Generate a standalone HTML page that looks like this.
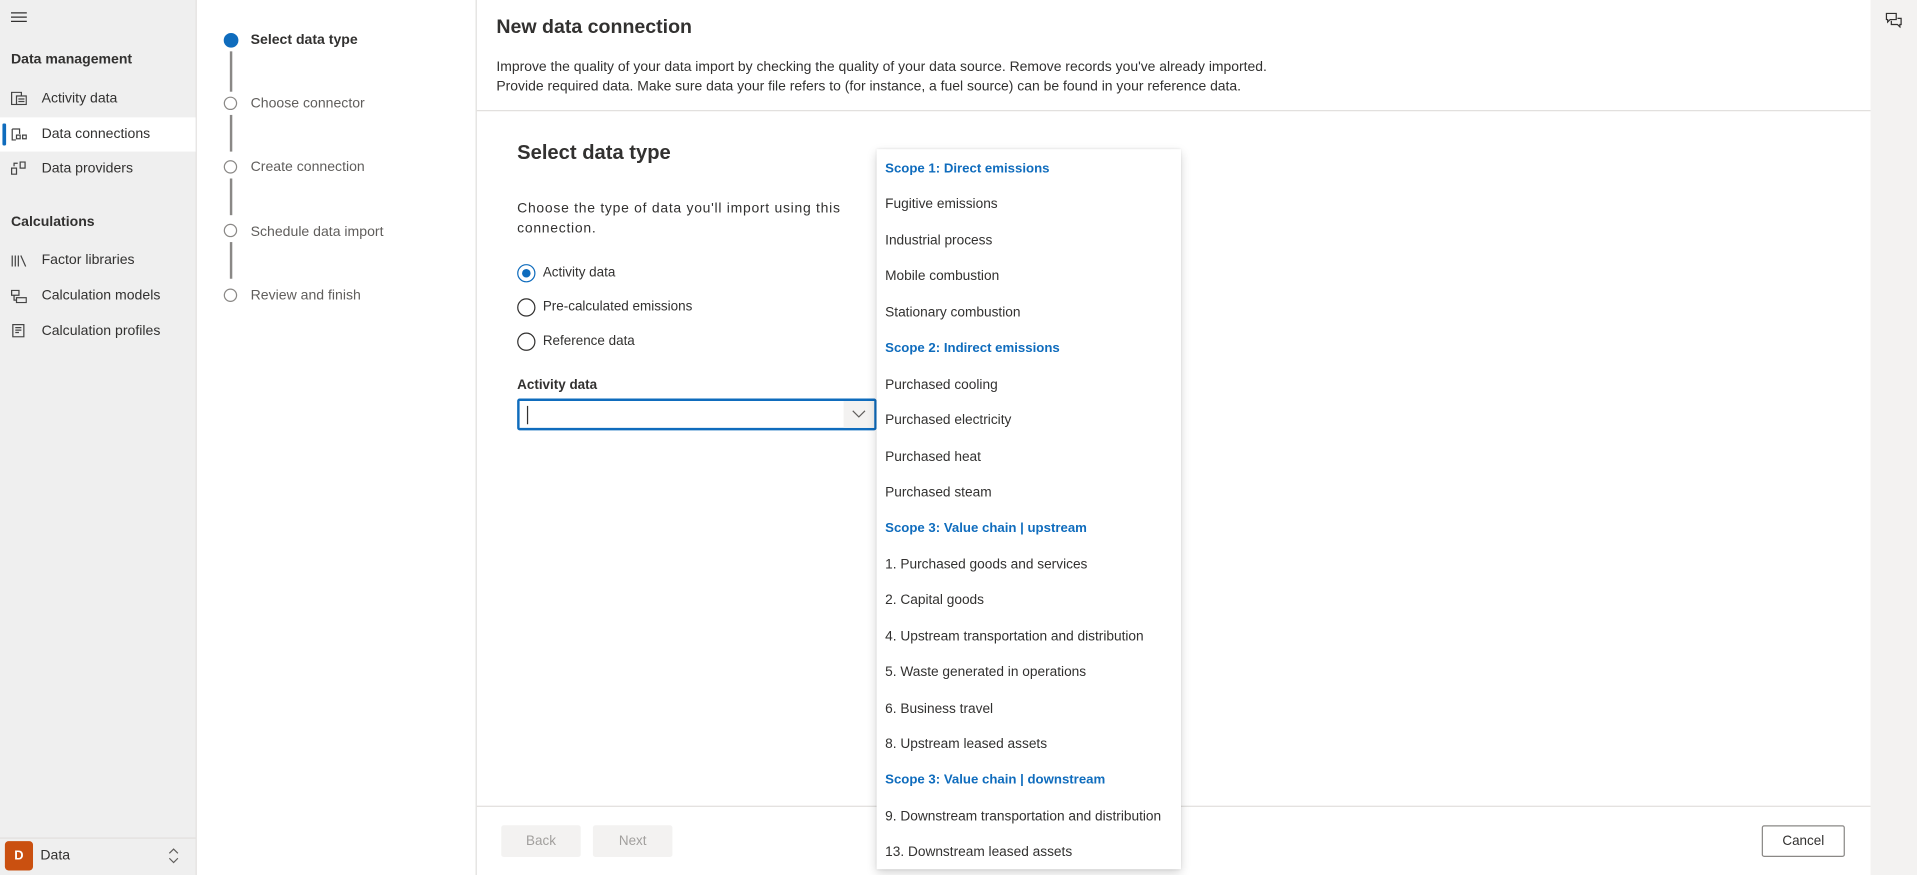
<!DOCTYPE html>
<html><head><meta charset="utf-8"><style>
html,body{margin:0;padding:0;width:1917px;height:875px;overflow:hidden;background:#fff}
#w{position:absolute;left:0;top:0;width:1568px;height:716px;transform:scale(1.22258);transform-origin:0 0;font-family:"Liberation Sans",sans-serif;color:#323130;font-size:11.5px}
.a{position:absolute;white-space:nowrap}
.nav{position:absolute;left:0;top:0;width:160px;height:716px;background:#efefef;border-right:1px solid #e1dfdd}
.steps{position:absolute;left:161px;top:0;width:228px;height:716px;background:#fff;border-right:1px solid #e1dfdd}
.circ{position:absolute;width:9px;height:9px;border:1.5px solid #8a8886;border-radius:50%;background:#fff}
.vl{position:absolute;left:188px;width:1.5px;background:#8a8886}
.st{position:absolute;left:205px;color:#605e5c;font-size:11.5px}
.item{position:absolute;left:34px;font-size:11.5px}
.ic{position:absolute;left:9px;width:13px;height:11px}
.radio{position:absolute;left:423px;width:13px;height:13px;border:1px solid #323130;border-radius:50%}
.dd{position:absolute;left:717px;top:122px;width:249px;height:589px;background:#fff;box-shadow:0 3px 8px rgba(0,0,0,.18),0 0 2px rgba(0,0,0,.12)}
.dd div{position:absolute;left:7px;font-size:11.2px;color:#323130;white-space:nowrap;margin-top:2px}
.dd .h{color:#0f6cbd;font-weight:bold;font-size:10.8px}
</style></head><body><div id="w">
<div class="nav">
 <svg class="a" style="left:9px;top:9px" width="13" height="10"><path d="M0 1.5H13M0 5H13M0 8.5H13" stroke="#323130" stroke-width="1"/></svg>
 <div class="a" style="left:9px;top:43px;font-weight:bold;font-size:11.5px">Data management</div>
 <svg class="ic" style="top:75px" viewBox="0 0 13 11"><rect x=".5" y=".5" width="8" height="10" fill="none" stroke="#444"/><rect x="4.5" y="3.5" width="8" height="7" fill="#efefef" stroke="#444"/><path d="M6 6h5M6 8h5" stroke="#444"/></svg>
 <div class="item" style="top:75px">Activity data</div>
 <div class="a" style="left:0;top:96px;width:160px;height:28px;background:#fff"></div>
 <div class="a" style="left:2px;top:101px;width:3px;height:18px;background:#0f6cbd;border-radius:1px"></div>
 <svg class="ic" style="top:104px" viewBox="0 0 13 11"><path d="M1 1.5h6v4M1 1.5v9h3" fill="none" stroke="#444"/><rect x="4.5" y="6.5" width="3" height="3" fill="none" stroke="#444"/><rect x="9.5" y="6.5" width="3" height="3" fill="none" stroke="#444"/></svg>
 <div class="item" style="top:104px">Data connections</div>
 <svg class="ic" style="top:132px" viewBox="0 0 13 11"><rect x=".5" y="5.5" width="4" height="5" fill="none" stroke="#444"/><rect x="7.5" y=".5" width="4" height="5" fill="none" stroke="#444"/><path d="M2.5 4V1.5h3" fill="none" stroke="#444"/></svg>
 <div class="item" style="top:132px">Data providers</div>
 <div class="a" style="left:9px;top:176px;font-weight:bold;font-size:11.5px">Calculations</div>
 <svg class="ic" style="top:208px" viewBox="0 0 13 11"><path d="M1 1v9M3.5 1v9M6 1v9M8 1l4 9" stroke="#444" fill="none"/></svg>
 <div class="item" style="top:207px">Factor libraries</div>
 <svg class="ic" style="top:237px" viewBox="0 0 13 11"><rect x=".5" y=".5" width="6" height="4" fill="none" stroke="#444"/><rect x="4.5" y="6.5" width="8" height="4" fill="none" stroke="#444"/><path d="M2.5 4.5v4h2" fill="none" stroke="#444"/></svg>
 <div class="item" style="top:236px">Calculation models</div>
 <svg class="ic" style="top:265px" viewBox="0 0 13 11"><rect x="1.5" y=".5" width="9" height="10" fill="none" stroke="#444"/><path d="M3.5 3h5M3.5 5h5M3.5 7h3" stroke="#444"/></svg>
 <div class="item" style="top:265px">Calculation profiles</div>
 <div class="a" style="left:0;top:685px;width:160px;height:1px;background:#e1dfdd"></div>
 <div class="a" style="left:4px;top:688px;width:23px;height:24px;background:#ca5010;border-radius:3px;color:#fff;font-size:10.5px;font-weight:bold;text-align:center;line-height:24px">D</div>
 <div class="a" style="left:33px;top:694px;font-size:11.5px">Data</div>
 <svg class="a" style="left:137px;top:693px" width="10" height="14"><path d="M1.5 5l3.5-3.5 3.5 3.5M1.5 9l3.5 3.5 3.5-3.5" fill="none" stroke="#605e5c"/></svg>
</div>
<div class="steps"></div>
<div class="circ" style="left:183px;top:27px;border:none;width:12px;height:12px;background:#0f6cbd"></div>
<div class="st" style="top:27px;color:#323130;font-weight:bold">Select data type</div>
<div class="vl" style="height:33px;top:42px"></div>
<div class="circ" style="left:183px;top:79px"></div><div class="st" style="top:79px">Choose connector</div>
<div class="vl" style="top:94px;height:30px"></div>
<div class="circ" style="left:183px;top:131px"></div><div class="st" style="top:131px">Create connection</div>
<div class="vl" style="top:146px;height:30px"></div>
<div class="circ" style="left:183px;top:183px"></div><div class="st" style="top:184px">Schedule data import</div>
<div class="vl" style="top:198px;height:30px"></div>
<div class="circ" style="left:183px;top:236px"></div><div class="st" style="top:236px">Review and finish</div>

<div class="a" style="left:406px;top:14px;font-size:16px;font-weight:bold;color:#323130">New data connection</div>
<div class="a" style="left:406px;top:47px;font-size:11.4px;line-height:16px">Improve the quality of your data import by checking the quality of your data source. Remove records you've already imported.<br>Provide required data. Make sure data your file refers to (for instance, a fuel source) can be found in your reference data.</div>
<div class="a" style="left:390px;top:90px;width:1140px;height:1px;background:#e1dfdd"></div>
<div class="a" style="left:1530px;top:0;width:38px;height:716px;background:#f3f2f1"></div>
<svg class="a" style="left:1542px;top:10px" width="15" height="13" viewBox="0 0 15 13"><path d="M1 1h8v5H4l-2 2V6H1z M5 7v3h5l2 2v-2h1V5h-3" fill="none" stroke="#323130" stroke-width="1"/></svg>

<div class="a" style="left:423px;top:116px;font-size:16.5px;font-weight:bold;color:#323130">Select data type</div>
<div class="a" style="left:423px;top:163px;font-size:11.4px;line-height:16px;letter-spacing:0.6px">Choose the type of data you'll import using this<br>connection.</div>
<div class="radio" style="top:216px;border-color:#0f6cbd"><div style="position:absolute;left:3px;top:3px;width:7px;height:7px;border-radius:50%;background:#0f6cbd"></div></div>
<div class="a" style="left:444px;top:217px;font-size:11px">Activity data</div>
<div class="radio" style="top:244px"></div><div class="a" style="left:444px;top:245px;font-size:11px">Pre-calculated emissions</div>
<div class="radio" style="top:272px"></div><div class="a" style="left:444px;top:273px;font-size:11px">Reference data</div>
<div class="a" style="left:423px;top:309px;font-size:11px;font-weight:bold">Activity data</div>
<div class="a" style="left:423px;top:326px;width:290px;height:22px;border:2px solid #0f6cbd;border-radius:2px;background:#fff"></div>
<div class="a" style="left:431px;top:332px;width:1px;height:15px;background:#323130"></div>
<div class="a" style="left:690px;top:328px;width:25px;height:22px;background:#f3f2f1"></div>
<svg class="a" style="left:697px;top:335px" width="11" height="7"><path d="M.5 1l5 5 5-5" fill="none" stroke="#605e5c"/></svg>

<div class="a" style="left:390px;top:659px;width:1140px;height:1px;background:#e1dfdd"></div>
<div class="a" style="left:410px;top:675px;width:65px;height:26px;background:#f3f2f1;color:#a19f9d;text-align:center;line-height:27px;font-size:11px;border-radius:2px">Back</div>
<div class="a" style="left:485px;top:675px;width:65px;height:26px;background:#f3f2f1;color:#a19f9d;text-align:center;line-height:27px;font-size:11px;border-radius:2px">Next</div>
<div class="a" style="left:1441px;top:675px;width:66px;height:24px;border:1px solid #8a8886;color:#323130;text-align:center;line-height:25px;font-size:11px;border-radius:2px">Cancel</div>

<div class="dd">
<div class="h" style="top:8px">Scope 1: Direct emissions</div>
<div style="top:37px">Fugitive emissions</div>
<div style="top:67px">Industrial process</div>
<div style="top:96px">Mobile combustion</div>
<div style="top:126px">Stationary combustion</div>
<div class="h" style="top:155px">Scope 2: Indirect emissions</div>
<div style="top:185px">Purchased cooling</div>
<div style="top:214px">Purchased electricity</div>
<div style="top:244px">Purchased heat</div>
<div style="top:273px">Purchased steam</div>
<div class="h" style="top:302px">Scope 3: Value chain | upstream</div>
<div style="top:332px">1. Purchased goods and services</div>
<div style="top:361px">2. Capital goods</div>
<div style="top:391px">4. Upstream transportation and distribution</div>
<div style="top:420px">5. Waste generated in operations</div>
<div style="top:450px">6. Business travel</div>
<div style="top:479px">8. Upstream leased assets</div>
<div class="h" style="top:508px">Scope 3: Value chain | downstream</div>
<div style="top:538px">9. Downstream transportation and distribution</div>
<div style="top:567px">13. Downstream leased assets</div>
</div>
</div></body></html>
